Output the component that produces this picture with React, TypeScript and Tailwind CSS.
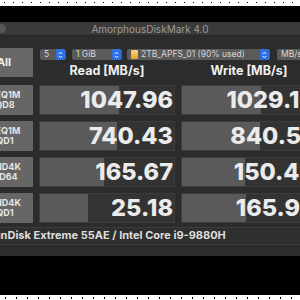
import React from "react";

const rows = [
  { l1: "SEQ1M", l2: "QD8", read: "1047.96", rb: 79, write: "1029.18", wb: 79 },
  { l1: "SEQ1M", l2: "QD1", read: "740.43", rb: 77, write: "840.57", wb: 78 },
  { l1: "RND4K", l2: "QD64", read: "165.67", rb: 64, write: "150.43", wb: 63 },
  { l1: "RND4K", l2: "QD1", read: "25.18", rb: 48, write: "165.92", wb: 64 },
];

function Stepper() {
  return (
    <div className="flex h-full w-[9px] items-center justify-center rounded-[2px] bg-[#2f6fe6]">
      <svg width="5" height="8" viewBox="0 0 5 8" fill="none" stroke="#fff" strokeWidth="1">
        <path d="M0.8 3 L2.5 1.2 L4.2 3" />
        <path d="M0.8 5 L2.5 6.8 L4.2 5" />
      </svg>
    </div>
  );
}

function Select({ width, children }: { width: string; children: React.ReactNode }) {
  return (
    <div className={`flex h-[11px] items-center justify-between rounded-[2px] bg-[#5a5a5a] pl-[4px] pr-[1px] ${width}`}>
      <div className="flex items-center gap-[3px] text-[8.5px] leading-none text-[#d6d6d6]">{children}</div>
      <Stepper />
    </div>
  );
}

function ValueBox({ value, bar }: { value: string; bar: number }) {
  return (
    <div className="relative h-[30px] w-[136px] overflow-hidden border border-[#3c3c3c] bg-[#333333]">
      <div className="absolute inset-y-0 left-0 bg-[#5a5a5a]" style={{ width: bar }} />
      <div className="relative flex h-full items-center justify-end pr-[1px] text-[23.5px] font-extrabold leading-none text-[#ebebeb]">
        {value}
      </div>
    </div>
  );
}

export default function App() {
  return (
    <div className="h-[300px] w-[300px] overflow-hidden bg-black font-['Inter',sans-serif]">
      <div className="h-[6px] bg-white bg-[radial-gradient(circle,#000_0.8px,transparent_1px)] bg-[length:9px_5px]" />
      <div className="h-[16px]" />

      <div className="-ml-[25px] w-[350px]">
        {/* title bar */}
        <div className="relative flex h-[14px] items-center justify-center border-b border-[#262626] bg-[#3a3a3a]">
          <div className="absolute left-[22px] top-[2px] h-[9px] w-[9px] rounded-full bg-[#565656]" />
          <span className="text-[10px] leading-none text-[#9c9c9c]">AmorphousDiskMark 4.0</span>
        </div>

        <div className="bg-[#2c2c2c] px-[6px] pb-[11px] pt-[12px]">
          {/* top section */}
          <div className="flex gap-[7px]">
            <div className="flex h-[29px] w-[52px] items-center justify-center bg-[#686868] pr-[6px] text-[11px] font-bold text-[#f0f0f0]">
              All
            </div>
            <div className="flex flex-col">
              <div className="mt-[1px] flex gap-[6px]">
                <Select width="w-[26px]">5</Select>
                <Select width="w-[50px]">1 GiB</Select>
                <div className="-ml-[1px] flex gap-[7px]">
                  <Select width="w-[143px]">
                    <span className="block h-[9px] w-[7px] rounded-[1px] bg-[linear-gradient(#f6d47a,#e9a320)]" />
                    2TB_APFS_01 (90% used)
                  </Select>
                  <Select width="w-[40px]">MB/s</Select>
                </div>
              </div>
              <div className="-ml-[1px] mt-[5px] grid grid-cols-[136px_136px] gap-[6px] text-[12.5px] font-bold leading-none text-[#f0f0f0]">
                <div className="text-center">Read [MB/s]</div>
                <div className="text-center">Write [MB/s]</div>
              </div>
            </div>
          </div>

          {/* results */}
          <div className="mt-[7px] flex flex-col gap-[6px]">
            {rows.map((r, i) => (
              <div key={i} className="flex gap-[6px]">
                <div className="flex h-[30px] w-[52px] flex-col items-center justify-center bg-[#666666] pr-[4px] text-[9px] font-bold leading-[10px] text-[#e4e4e4]">
                  <span>{r.l1}</span>
                  <span>{r.l2}</span>
                </div>
                <ValueBox value={r.read} bar={r.rb} />
                <ValueBox value={r.write} bar={r.wb} />
              </div>
            ))}
          </div>

          {/* footer */}
          <div className="mt-[4px] flex h-[18px] items-center border-y border-[#3c3c3c] bg-[#2f2f2f] pl-[6px] text-[11px] font-bold text-[#dedede]">
            SanDisk Extreme 55AE / Intel Core i9-9880H
          </div>
        </div>
      </div>

      <div className="h-[39px]" />
      <div className="h-[6px] bg-white bg-[radial-gradient(circle,#000_0.8px,transparent_1px)] bg-[length:11px_6px]" />
    </div>
  );
}
